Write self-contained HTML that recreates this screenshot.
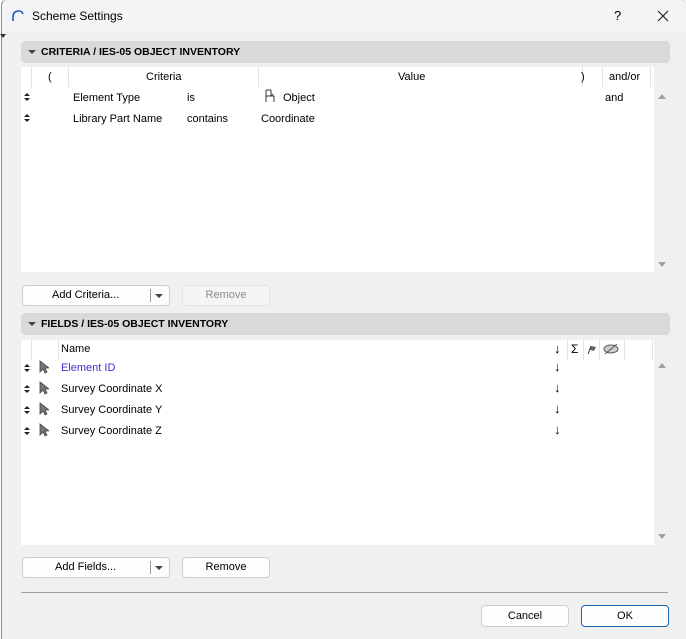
<!DOCTYPE html>
<html><head><style>
*{box-sizing:border-box;margin:0;padding:0}
body{width:686px;height:638px;background:#fff;font-family:"Liberation Sans",sans-serif;font-size:11px;color:#000;position:relative;overflow:hidden}
.win{position:absolute;left:1px;top:-1px;width:685px;height:640px;background:#f0f0f0;border-left:1px solid #8a8a8a;border-top:1px solid #c8c8c8;border-radius:6px 6px 0 0}
.title{position:absolute;left:0;top:0;right:0;height:32px;background:#f3f4f6;border-radius:6px 6px 0 0}
.a{position:absolute}
.hdr{position:absolute;left:19px;width:649px;height:22px;background:#d9d9d9;border-radius:4px;font-weight:bold;font-size:10.5px;line-height:22px;padding-left:20px}
.hdr:before{content:"";position:absolute;left:7px;top:9px;border-left:4px solid transparent;border-right:4px solid transparent;border-top:4px solid #444}
.tbl{position:absolute;left:19px;width:633px;background:#fff}
.sb{position:absolute;left:652px;width:16px;background:#f0f0f0}
.up{position:absolute;left:4px;border-left:4px solid transparent;border-right:4px solid transparent;border-bottom:5px solid #a0a0a0}
.dn{position:absolute;left:4px;border-left:4px solid transparent;border-right:4px solid transparent;border-top:5px solid #a0a0a0}
.sep{position:absolute;top:0;width:1px;height:20px;background:#e3e3e3}
.btn{position:absolute;height:21px;background:#fdfdfd;border:1px solid #cfcfcf;border-radius:4px;text-align:center;line-height:19px}
.updn{position:absolute;width:7px;height:9px}
.updn:before{content:"";position:absolute;left:0;top:0;border-left:3px solid transparent;border-right:3px solid transparent;border-bottom:3px solid #222}
.updn:after{content:"";position:absolute;left:0;top:5px;border-left:3px solid transparent;border-right:3px solid transparent;border-top:3px solid #222}
.cur{position:absolute}
</style></head><body>
<div class="win">
<div class="title">
 <svg class="a" style="left:9px;top:9px" width="14" height="14" viewBox="0 0 14 14"><path d="M2 12 L2 8 Q2 2 8 2 Q11 2 12 5" fill="none" stroke="#1a5fb4" stroke-width="1.6"/></svg>
 <div class="a" style="left:30px;top:9px;font-size:12px">Scheme Settings</div>
 <div class="a" style="left:612px;top:8px;font-size:13px">?</div>
 <svg class="a" style="left:655px;top:10px" width="12" height="12"><path d="M1 1L11 11M11 1L1 11" stroke="#222" stroke-width="1.2"/></svg>
</div>

<div class="hdr" style="top:41px">CRITERIA / IES-05 OBJECT INVENTORY</div>
<div class="tbl" style="top:67px;height:205px">
 <div class="sep" style="left:10px"></div><div class="sep" style="left:47px"></div><div class="sep" style="left:237px"></div><div class="sep" style="left:561px"></div><div class="sep" style="left:581px"></div><div class="sep" style="left:629px"></div>
 <div class="a" style="left:27px;top:4px">(</div>
 <div class="a" style="left:125px;top:4px">Criteria</div>
 <div class="a" style="left:377px;top:4px">Value</div>
 <div class="a" style="left:560px;top:4px">)</div>
 <div class="a" style="left:588px;top:4px">and/or</div>
 <div class="updn" style="left:3px;top:26px"></div>
 <div class="a" style="left:52px;top:25px">Element Type</div>
 <div class="a" style="left:166px;top:25px">is</div>
 <svg class="a" style="left:243px;top:22px" width="12" height="14" viewBox="0 0 12 14"><path d="M2 13V2Q2 1 3 1H6Q7 1 7 2V7H10V13M2 7H10M7 7L9 5" fill="none" stroke="#333" stroke-width="1"/></svg>
 <div class="a" style="left:262px;top:25px">Object</div>
 <div class="a" style="left:584px;top:25px">and</div>
 <div class="updn" style="left:3px;top:47px"></div>
 <div class="a" style="left:52px;top:46px">Library Part Name</div>
 <div class="a" style="left:166px;top:46px">contains</div>
 <div class="a" style="left:240px;top:46px">Coordinate</div>
</div>
<div class="sb" style="top:87px;height:185px"><div class="up" style="top:7px"></div><div class="dn" style="top:175px"></div></div>

<div class="btn" style="left:20px;top:285px;width:148px"><span style="position:absolute;left:29px">Add Criteria...</span><span style="position:absolute;left:127px;top:3px;width:1px;height:13px;background:#999"></span><span style="position:absolute;left:132px;top:8px;border-left:4px solid transparent;border-right:4px solid transparent;border-top:4px solid #444"></span></div>
<div class="btn" style="left:180px;top:285px;width:88px;color:#8a8a8a;background:#f5f5f5;border-color:#e4e4e4">Remove</div>

<div class="hdr" style="top:313px">FIELDS / IES-05 OBJECT INVENTORY</div>
<div class="tbl" style="top:340px;height:205px">
 <div class="sep" style="left:10px"></div><div class="sep" style="left:37px"></div><div class="sep" style="left:546px"></div><div class="sep" style="left:562px"></div><div class="sep" style="left:578px"></div><div class="sep" style="left:603px"></div><div class="sep" style="left:631px"></div>
 <div class="a" style="left:40px;top:3px">Name</div>
 <div class="a" style="left:533px;top:1px;font-size:13px">↓</div>
 <div class="a" style="left:550px;top:2px;font-size:12px">Σ</div>
 <svg class="a" style="left:565px;top:3px" width="12" height="12"><path d="M2 11L5 3" stroke="#333"/><path d="M5 3L10 4L8 8L4 7Z" fill="#666"/></svg>
 <svg class="a" style="left:581px;top:3px" width="18" height="12"><ellipse cx="9" cy="6" rx="7" ry="4" fill="#ccc" stroke="#555"/><path d="M3 11L15 1" stroke="#555"/></svg>
 <div class="updn" style="left:3px;top:24px"></div>
 <svg class="cur" style="left:18px;top:20px" width="10" height="14"><path d="M1 1V12L4 9L6 13L8 12L6 8H10Z" fill="#777" stroke="#444" stroke-width=".8"/></svg>
 <div class="a" style="left:40px;top:22px;color:#3a2fd0">Element ID</div>
 <div class="a" style="left:533px;top:19px;font-size:13px">↓</div>
 <div class="updn" style="left:3px;top:45px"></div>
 <svg class="cur" style="left:18px;top:41px" width="10" height="14"><path d="M1 1V12L4 9L6 13L8 12L6 8H10Z" fill="#777" stroke="#444" stroke-width=".8"/></svg>
 <div class="a" style="left:40px;top:43px">Survey Coordinate X</div>
 <div class="a" style="left:533px;top:40px;font-size:13px">↓</div>
 <div class="updn" style="left:3px;top:66px"></div>
 <svg class="cur" style="left:18px;top:62px" width="10" height="14"><path d="M1 1V12L4 9L6 13L8 12L6 8H10Z" fill="#777" stroke="#444" stroke-width=".8"/></svg>
 <div class="a" style="left:40px;top:64px">Survey Coordinate Y</div>
 <div class="a" style="left:533px;top:61px;font-size:13px">↓</div>
 <div class="updn" style="left:3px;top:87px"></div>
 <svg class="cur" style="left:18px;top:83px" width="10" height="14"><path d="M1 1V12L4 9L6 13L8 12L6 8H10Z" fill="#777" stroke="#444" stroke-width=".8"/></svg>
 <div class="a" style="left:40px;top:85px">Survey Coordinate Z</div>
 <div class="a" style="left:533px;top:82px;font-size:13px">↓</div>
</div>
<div class="sb" style="top:358px;height:187px"><div class="up" style="top:5px"></div><div class="dn" style="top:176px"></div></div>

<div class="btn" style="left:20px;top:557px;width:148px"><span style="position:absolute;left:32px">Add Fields...</span><span style="position:absolute;left:127px;top:3px;width:1px;height:13px;background:#999"></span><span style="position:absolute;left:132px;top:8px;border-left:4px solid transparent;border-right:4px solid transparent;border-top:4px solid #444"></span></div>
<div class="btn" style="left:180px;top:557px;width:88px">Remove</div>

<div class="a" style="left:19px;top:592px;width:647px;height:1px;background:#a0a0a0"></div>
<div class="btn" style="left:479px;top:605px;width:88px;height:22px;line-height:20px">Cancel</div>
<div class="btn" style="left:579px;top:605px;width:88px;height:22px;line-height:20px;border-color:#1a64b8">OK</div>
</div>
<div class="a" style="left:0;top:34px;border-left:3px solid transparent;border-right:3px solid transparent;border-top:4px solid #333"></div>
</body></html>
